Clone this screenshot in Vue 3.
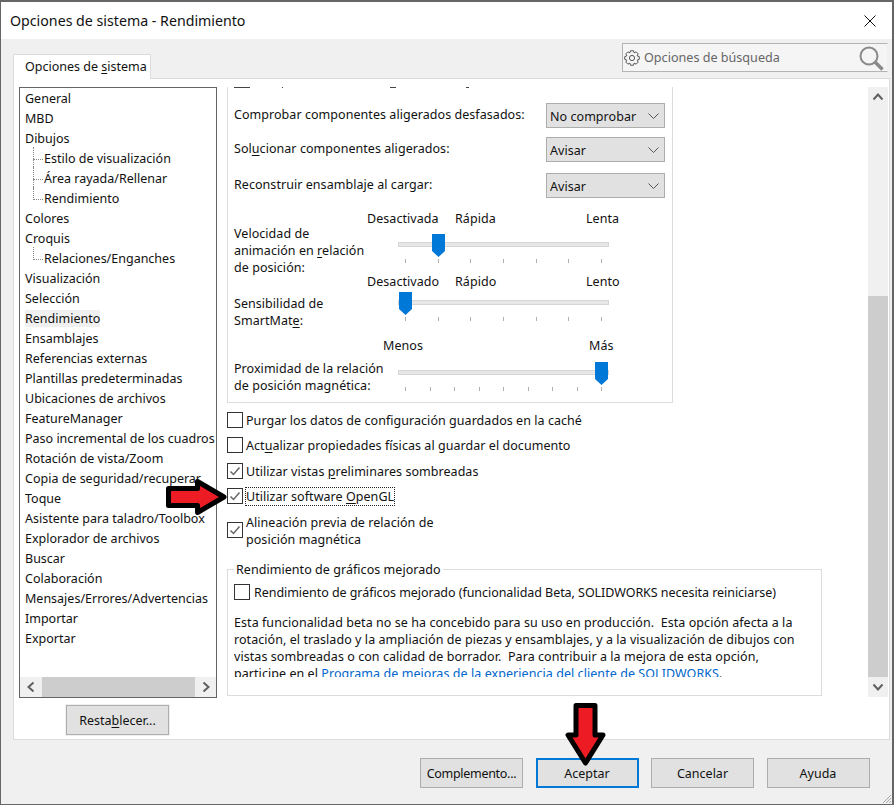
<script setup>
const tree = [
  ['General', 0], ['MBD', 0], ['Dibujos', 0],
  ['Estilo de visualización', 1], ['Área rayada/Rellenar', 1], ['Rendimiento', 2],
  ['Colores', 0], ['Croquis', 0], ['Relaciones/Enganches', 2],
  ['Visualización', 0], ['Selección', 0], ['Rendimiento', 0, true], ['Ensamblajes', 0],
  ['Referencias externas', 0], ['Plantillas predeterminadas', 0], ['Ubicaciones de archivos', 0],
  ['FeatureManager', 0], ['Paso incremental de los cuadros', 0], ['Rotación de vista/Zoom', 0],
  ['Copia de seguridad/recuperar', 0], ['Toque', 0], ['Asistente para taladro/Toolbox', 0],
  ['Explorador de archivos', 0], ['Buscar', 0], ['Colaboración', 0],
  ['Mensajes/Errores/Advertencias', 0], ['Importar', 0], ['Exportar', 0]
]
const ticksA = [6, 39, 71, 104, 137, 169, 202]
const ticksB = [6, 31, 55, 80, 104, 129, 153, 178, 202]

// Cog outline: eight teeth around a ring
const gearPath = (() => {
  const pts = []
  const teeth = 8
  for (let i = 0; i < teeth; i++) {
    const a = (i / teeth) * Math.PI * 2
    const step = (Math.PI * 2) / teeth
    const seq = [[5.6, -0.5], [7.4, -0.24], [7.4, 0.24], [5.6, 0.5]]
    for (const [r, f] of seq) {
      const t = a + f * step
      pts.push((8 + r * Math.cos(t)).toFixed(2) + ' ' + (8 + r * Math.sin(t)).toFixed(2))
    }
  }
  return 'M' + pts.join('L') + 'Z'
})()
</script>

<template>
  <div class="window">
    <header class="titlebar">
      <span class="title">Opciones de sistema - Rendimiento</span>
      <svg class="close" width="14" height="14" viewBox="0 0 14 14"><path d="M1.5 1.5 12.5 12.5M12.5 1.5 1.5 12.5" stroke="#111" stroke-width="1" fill="none"/></svg>
    </header>

    <div class="body">
      <div class="tabstrip">
        <div class="tab">Opciones de <u>s</u>istema</div>
        <div class="search">
          <svg class="gear" width="16" height="16" viewBox="0 0 16 16" fill="none" stroke="#555" stroke-width="1" stroke-linejoin="round"><path :d="gearPath"/><circle cx="8" cy="8" r="2.600"/></svg>
          <span class="search-text">Opciones de búsqueda</span>
          <svg class="lens" width="26" height="26" viewBox="0 0 26 26" fill="none"><circle cx="11" cy="11" r="8.500" stroke="#8a8a8a" stroke-width="2"/><path d="M17 17 24.500 24.500" stroke="#8a8a8a" stroke-width="3.500"/></svg>
        </div>
      </div>

      <main class="panel">
        <aside class="left">
          <div class="treebox">
            <ul class="tree">
              <li v-for="(t, i) in tree" :key="i" :class="['node', t[1] ? 'child' : '', t[1] === 2 ? 'last' : '']">
                <span :class="{ sel: t[2] }">{{ t[0] }}</span>
              </li>
            </ul>
            <div class="hscroll">
              <button class="sb-btn"><svg width="10" height="12" viewBox="0 0 10 12"><path d="M7.500 1.500 2.500 6l5 4.500" fill="none" stroke="#606060" stroke-width="2"/></svg></button>
              <div class="hthumb"></div>
              <button class="sb-btn"><svg width="10" height="12" viewBox="0 0 10 12"><path d="M2.500 1.500 7.500 6l-5 4.500" fill="none" stroke="#606060" stroke-width="2"/></svg></button>
            </div>
          </div>
          <button class="btn reset">Resta<u>b</u>lecer...</button>
        </aside>

        <section class="pane">
          <div class="content">
            <div class="groupA">
              <div class="cutoff"><i class="m1"></i><i class="m2"></i><i class="m3"></i><i class="m4"></i></div>
              <div class="row r1"><span>Comprobar componentes aligerados desfasados:</span><div class="select">No comprobar<svg width="11" height="6" viewBox="0 0 11 6"><path d="M.5.500 5.500 5.500 10.500.500" fill="none" stroke="#555"/></svg></div></div>
              <div class="row r2"><span>Sol<u>u</u>cionar componentes aligerados:</span><div class="select">Avisar<svg width="11" height="6" viewBox="0 0 11 6"><path d="M.5.500 5.500 5.500 10.500.500" fill="none" stroke="#555"/></svg></div></div>
              <div class="row r3"><span>Reconstruir ensamblaje al cargar:</span><div class="select">Avisar<svg width="11" height="6" viewBox="0 0 11 6"><path d="M.5.500 5.500 5.500 10.500.500" fill="none" stroke="#555"/></svg></div></div>

              <div class="scale s1"><span class="d">Desactivada</span><span class="f">Rápida</span><span class="e">Lenta</span></div>
              <div class="slider-row h1">
                <div class="slabel">Velocidad de<br>animación en <u>r</u>elación<br>de posición:</div>
                <div class="track">
                  <i v-for="x in ticksA" :key="x" class="tick" :style="{ left: x + 'px' }"></i>
                  <svg class="thumb" style="left:33px" width="13" height="23" viewBox="0 0 13 23"><path d="M0 0H13V17L6.500 23 0 17Z" fill="#0078d7"/></svg>
                </div>
              </div>
              <div class="scale s2"><span class="d">Desactivado</span><span class="f">Rápido</span><span class="e">Lento</span></div>
              <div class="slider-row h2">
                <div class="slabel">Sensibilidad de<br>SmartMat<u>e</u>:</div>
                <div class="track">
                  <i v-for="x in ticksA" :key="x" class="tick" :style="{ left: x + 'px' }"></i>
                  <svg class="thumb" style="left:0" width="13" height="23" viewBox="0 0 13 23"><path d="M0 0H13V17L6.500 23 0 17Z" fill="#0078d7"/></svg>
                </div>
              </div>
              <div class="scale s3"><span class="m">Menos</span><span class="x">Más</span></div>
              <div class="slider-row h3">
                <div class="slabel">Proximidad de la relación<br>de posición magnética:</div>
                <div class="track">
                  <i v-for="x in ticksB" :key="x" class="tick" :style="{ left: x + 'px' }"></i>
                  <svg class="thumb" style="left:196px" width="13" height="23" viewBox="0 0 13 23"><path d="M0 0H13V17L6.500 23 0 17Z" fill="#0078d7"/></svg>
                </div>
              </div>
            </div>

            <label class="check c1"><span class="box"></span><span>Purgar los datos de configuración guardados en la caché</span></label>
            <label class="check c2"><span class="box"></span><span>Act<u>u</u>alizar propiedades físicas al guardar el documento</span></label>
            <label class="check c3"><span class="box"><svg width="14" height="14" viewBox="0 0 14 14"><path d="M2.500 7.500 5.500 10.500 11.500 3.500" fill="none" stroke="#666" stroke-width="1.500"/></svg></span><span>Utilizar vistas <u>p</u>reliminares sombreadas</span></label>
            <label class="check c4"><span class="box"><svg width="14" height="14" viewBox="0 0 14 14"><path d="M2.500 7.500 5.500 10.500 11.500 3.500" fill="none" stroke="#666" stroke-width="1.500"/></svg></span><span class="focus">Utilizar software <u>O</u>penGL</span></label>
            <label class="check c5"><span class="box"><svg width="14" height="14" viewBox="0 0 14 14"><path d="M2.500 7.500 5.500 10.500 11.500 3.500" fill="none" stroke="#666" stroke-width="1.500"/></svg></span><span>Alineación previa de relación de<br>posición magnética</span></label>

            <fieldset class="groupB">
              <legend>Rendimiento de gráficos mejorado</legend>
              <label class="check c6"><span class="box"></span><span>Rendimiento de gráficos mejorado (funcionalidad Beta, SOLIDWORKS necesita reiniciarse)</span></label>
              <p class="desc">Esta funcionalidad beta no se ha concebido para su uso en producción.&nbsp; Esta opción afecta a la<br>rotación, el traslado y la ampliación de piezas y ensamblajes, y a la visualización de dibujos con<br>vistas sombreadas o con calidad de borrador.&nbsp; Para contribuir a la mejora de esta opción,<br>participe en el <a>Programa de mejoras de la experiencia del cliente de SOLIDWORKS</a>.</p>
            </fieldset>
          </div>
          <div class="vscroll">
            <button class="sb-btn v"><svg width="12" height="10" viewBox="0 0 12 10"><path d="M1.500 7.500 6 2.500l4.500 5" fill="none" stroke="#606060" stroke-width="2"/></svg></button>
            <div class="vrest"></div>
            <div class="vthumb"></div>
            <button class="sb-btn v"><svg width="12" height="10" viewBox="0 0 12 10"><path d="M1.500 2.500 6 7.500l4.500-5" fill="none" stroke="#606060" stroke-width="2"/></svg></button>
          </div>
        </section>
      </main>

      <footer class="footer">
        <button class="btn tight">Complemento...</button>
        <button class="btn primary">Aceptar</button>
        <button class="btn">Cancelar</button>
        <button class="btn">Ayuda</button>
      </footer>
      <svg class="grip" width="12" height="12" viewBox="0 0 12 12"><path d="M11 3 3 11M11 6 6 11M11 9 9 11" stroke="#a8a8a8" fill="none"/></svg>
    </div>

    <svg class="arrow right-arrow" width="72" height="50" viewBox="0 0 72 50"><path d="M8.500 16.500H37.500V9.500L64 25 37.500 40.500V33.500H8.500Z" fill="#ed1c24" stroke="#000" stroke-width="5" stroke-linejoin="round"/></svg>
    <svg class="arrow down-arrow" width="56" height="70" viewBox="0 0 56 70"><path d="M18 5.500H37V35H45L27.500 63 10 35H18Z" fill="#ed1c24" stroke="#000" stroke-width="5" stroke-linejoin="round"/></svg>
  </div>
</template>

<style>
html, body { margin: 0; background: #fff; }
</style>

<style scoped>
* { box-sizing: border-box; }
.window {
  position: relative;
  width: 894px; height: 805px;
  border: 1px solid #666; border-top-width: 2px; border-right-width: 2px;
  display: flex; flex-direction: column;
  font: 12.5px/17px "Noto Sans", sans-serif;
  color: #111;
  overflow: hidden;
}
u { text-underline-offset: 2px; }
.titlebar { height: 37px; flex: none; display: flex; align-items: center; justify-content: space-between; padding: 0 15px 0 9px; background: #fff; }
.title { font-size: 14.2px; }
.body { flex: 1; background: #f0f0f0; display: flex; flex-direction: column; padding-left: 12px; position: relative; min-height: 0; }
.tabstrip { height: 39px; flex: none; display: flex; justify-content: space-between; align-items: flex-end; padding-right: 4px; position: relative; }
.tab { width: 138px; height: 25px; background: #fff; border: 1px solid #dcdcdc; border-bottom: 0; padding: 3px 0 0 11px; position: relative; top: 1px; z-index: 1; white-space: nowrap; }
.search { position: absolute; right: 4px; top: 4px; width: 266px; height: 29px; border: 1px solid #b4b4b4; border-right-color: #f0f0f0; background: #f5f5f5; display: flex; align-items: center; padding: 0 3px 0 1px; }
.gear { flex: none; }
.search-text { margin-left: 4px; font-size: 12.600px; color: #666; flex: 1; }
.panel { flex: none; height: 662px; width: 877px; background: #fff; border: 1px solid #dcdcdc; display: flex; padding: 8px 0 0 5px; }
.left { width: 208px; flex: none; display: flex; flex-direction: column; }
.treebox { width: 198px; height: 611px; border: 1px solid #646464; display: flex; flex-direction: column; overflow: hidden; }
.tree { list-style: none; margin: 0; padding: 1px 0 0 5px; flex: 1; overflow: hidden; }
.node { height: 20px; line-height: 20px; white-space: nowrap; position: relative; }
.child { padding-left: 19px; }
.child::before { content: ""; position: absolute; left: 8px; top: -2px; bottom: 0; border-left: 1px dotted #888; }
.child.last::before { bottom: 9px; }
.child::after { content: ""; position: absolute; left: 8px; top: 10px; width: 10px; border-top: 1px dotted #888; }
.sel { background: #f0f0f0; }
.hscroll { height: 20px; flex: none; display: flex; justify-content: space-between; background: #f0f0f0; }
.sb-btn { border: 0; padding: 0; background: #f0f0f0; width: 21px; flex: none; display: flex; align-items: center; justify-content: center; }
.hthumb { width: 153px; background: #cdcdcd; }
.btn { width: 103px; height: 30px; border: 1px solid #adadad; background: #e1e1e1; font: inherit; color: #111; padding: 0; white-space: nowrap; }
.tight { letter-spacing: -.3px; }
.reset { margin: 7px 0 0 47px; outline: 1px solid #f0f0f0; }
.pane { flex: 1; display: flex; min-width: 0; height: 610px; }
.content { flex: 1; min-width: 0; overflow: hidden; letter-spacing: .05px; }
.groupA { display: flow-root; width: 446px; height: 316px; border: 1px solid #dcdcdc; border-top: 0; position: relative; }
.cutoff i { position: absolute; top: 0; height: 1px; background: #444; }
.m1 { left: 6px; width: 16px; }
.m2 { left: 54px; width: 1px; }
.m3 { left: 162px; width: 6px; background: #111; }
.m4 { left: 238px; width: 3px; }
.row { display: flex; justify-content: space-between; align-items: center; padding: 0 7px 0 6px; height: 25px; }
.row > span { margin-bottom: 2px; }
.r1 { margin-top: 16px; }
.r2 { margin-top: 9px; }
.r3 { margin-top: 11px; }
.select { width: 119px; height: 25px; background: #e1e1e1; border: 1px solid #adadad; display: flex; align-items: center; justify-content: space-between; padding: 1px 5px 0 3px; }
.scale { height: 17px; position: relative; }
.scale span { position: absolute; top: 0; white-space: nowrap; }
.s1 { margin-top: 12px; }
.s3 span { top: 1px; }
.d { left: 139px; } .f { left: 227px; } .e { left: 358px; }
.m { left: 155px; } .x { left: 361px; }
.slider-row { display: flex; padding-left: 6px; position: relative; }
.h1 { height: 46px; }
.h2 { height: 46px; }
.h3 { height: 32px; }
.slabel { width: 164px; flex: none; white-space: nowrap; }
.h1 .slabel { margin-top: -2px; }
.h2 .slabel { padding-top: 5px; }
.h3 .slabel { padding-top: 7px; }
.track { width: 211px; height: 5px; background: #e7e7e7; border: 1px solid #d6d6d6; position: relative; }
.h1 .track { margin-top: 15px; }
.h2 .track { margin-top: 10px; }
.h3 .track { margin-top: 17px; }
.thumb { position: absolute; top: -9px; }
.tick { position: absolute; top: 16px; width: 1px; height: 4px; background: #b0b0b0; }
.check { display: flex; align-items: flex-start; gap: 3px; white-space: nowrap; }
.box { width: 16px; height: 16px; border: 1px solid #333; flex: none; display: flex; align-items: center; justify-content: center; background: #fff; }
.c1 { margin-top: 9px; }
.c2 { margin-top: 8px; }
.c3 { margin-top: 9px; }
.c4 { margin-top: 8px; }
.c5 { margin-top: 9px; align-items: center; }
.c5 .box { margin-top: -2px; }
.focus { outline: 1px dotted #222; outline-offset: 0; }
.groupB { margin: 13px 0 0 0; padding: 0; width: 595px; height: 135px; border: 1px solid #dcdcdc; position: relative; }
legend { margin-left: 6px; padding: 0 2px; line-height: 17px; }
.c6 { margin: 6px 0 0 6px; gap: 4px; letter-spacing: -.05px; }
.desc { margin: 13px 0 0 6px; height: 63px; overflow: hidden; white-space: nowrap; letter-spacing: .06px; }
a { color: #0066cc; }
.vscroll { width: 20px; flex: none; height: 610px; margin-right: 1px; background: #f0f0f0; display: flex; flex-direction: column; }
.sb-btn.v { width: 20px; height: 20px; }
.vrest { height: 189px; }
.vthumb { flex: 1; background: #cdcdcd; }
.footer { flex: 1; display: flex; gap: 12.5px; padding: 18px 0 0 407px; letter-spacing: -.15px; }
.primary { border: 2px solid #0078d7; }
.grip { position: absolute; right: 0; bottom: 0; }
.arrow { position: absolute; z-index: 3; pointer-events: none; }
.right-arrow { left: 159px; top: 470px; }
.down-arrow { left: 557px; top: 698px; }
</style>
